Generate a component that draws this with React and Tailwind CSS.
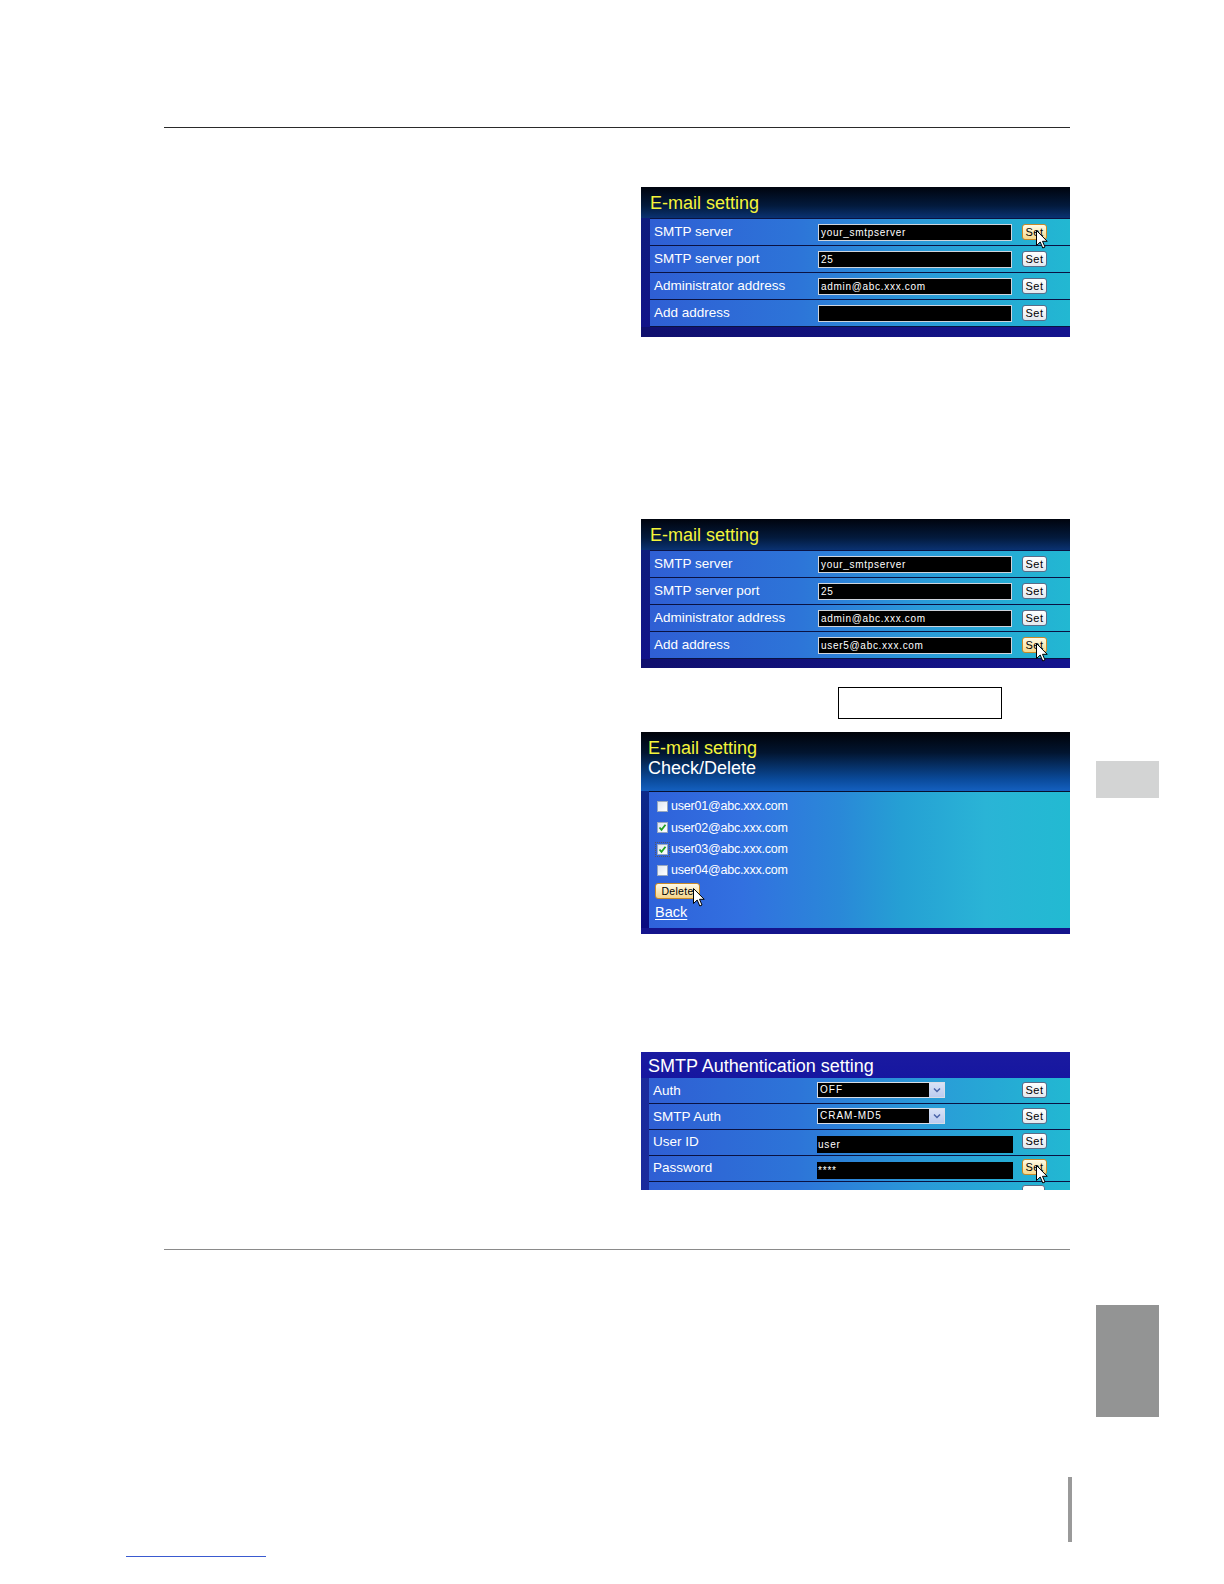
import React from "react";

const Cursor = ({ className }) => (
  <svg
    className={"absolute pointer-events-none " + className}
    width="12"
    height="19"
    viewBox="0 0 12 19"
  >
    <path
      d="M0.5 0.5 L0.5 15.5 L4.2 12 L6.8 18 L9 17 L6.5 11.3 L11.2 11.3 Z"
      fill="white"
      stroke="black"
      strokeWidth="1"
    />
  </svg>
);

const SetButton = ({ hover }) => (
  <div
    className={
      "relative w-[25px] h-[16px] rounded-[3px] border flex items-center justify-center text-[11px] leading-none text-black tracking-[0.5px] " +
      (hover
        ? "border-[#c88a2a] bg-[linear-gradient(#fffbe6,#f6d98c)]"
        : "border-[#5a6c88] bg-[linear-gradient(#ffffff,#e4e8ee)]")
    }
    style={{ fontFamily: '"Liberation Sans", Arial, sans-serif' }}
  >
    Set
    {hover && <Cursor className="left-[13px] top-[5px]" />}
  </div>
);

const rowBg =
  "bg-[linear-gradient(90deg,#2f5fd4_0%,#2d74d8_35%,#2a9ad8_65%,#22b8d2_100%)]";

const EmailRow = ({ label, value, hover }) => (
  <div className={"flex items-center h-[27px] border-b border-[#0a1242] " + rowBg}>
    <div className="w-[168px] pl-[4px] text-white text-[13.5px] leading-none">{label}</div>
    <div className="w-[194px] h-[17px] bg-black border border-[#cfd4dc] text-white text-[10px] pl-[2px] leading-[15px] tracking-[0.7px]">
      {value}
    </div>
    <div className="ml-[10px]">
      <SetButton hover={hover} />
    </div>
  </div>
);

const EmailPanel = ({ h, rows }) => (
  <div
    className={"flex flex-col bg-[linear-gradient(180deg,#0d1e78,#12128a)] " + h}
    style={{ fontFamily: '"Liberation Sans", Arial, sans-serif' }}
  >
    <div className="h-[31px] shrink-0 bg-[linear-gradient(180deg,#00040e_0%,#031a3c_60%,#0a3272_100%)] pl-[9px] pt-[5px] text-[18px] leading-[22px] text-[#f4f43a]">
      E-mail setting
    </div>
    <div className="ml-[9px] flex flex-col border-t border-[#0a1242]">
      {rows.map((r) => (
        <EmailRow key={r.label} {...r} />
      ))}
    </div>
    <div className="flex-1 bg-[linear-gradient(90deg,#10106e,#14148e)]" />
  </div>
);

const Check = ({ checked, focus }) => (
  <div
    className={
      "w-[15px] h-[15px] flex items-center justify-center " +
      (focus ? "border border-dotted border-[#556]" : "")
    }
  >
    <div className="w-[11px] h-[11px] bg-[linear-gradient(135deg,#dfe6f2,#ffffff)] border border-[#98a8c0] flex items-center justify-center">
      {checked && (
        <svg width="9" height="9" viewBox="0 0 9 9">
          <path d="M1.5 4.5 L3.5 6.8 L7.5 1.8" fill="none" stroke="#21a121" strokeWidth="1.8" />
        </svg>
      )}
    </div>
  </div>
);

const CheckPanel = () => (
  <div
    className="h-[202px] flex flex-col bg-[linear-gradient(180deg,#0d1e78,#12128a)]"
    style={{ fontFamily: '"Liberation Sans", Arial, sans-serif' }}
  >
    <div className="h-[59px] shrink-0 bg-[linear-gradient(180deg,#000208_0%,#021530_35%,#0a4a9a_80%,#1460c0_100%)] pl-[7px] pt-[6px]">
      <div className="text-[18px] leading-[20px] text-[#f4f43a]">E-mail setting</div>
      <div className="text-[18px] leading-[20px] text-white">Check/Delete</div>
    </div>
    <div className="flex flex-1 bg-[linear-gradient(180deg,#0d2a8a,#0a0a80)]">
      <div className="w-[8px] shrink-0" />
      <div className="flex-1 border-t border-[#07102e] bg-[linear-gradient(90deg,#2f62da_0%,#3270e0_22%,#2a88d8_45%,#25a0d4_60%,#2ab4d6_80%,#22bad2_100%)] pl-[6px] pt-[4px] flex flex-col">
        {[
          ["user01@abc.xxx.com", false, false],
          ["user02@abc.xxx.com", true, false],
          ["user03@abc.xxx.com", true, true],
          ["user04@abc.xxx.com", false, false],
        ].map(([t, c, f]) => (
          <div key={t} className="h-[21.3px] flex items-center gap-[1px]">
            <Check checked={c} focus={f} />
            <span className="text-white text-[12.5px] leading-none tracking-[-0.2px]">{t}</span>
          </div>
        ))}
        <div className="mt-[2px] relative w-[45px] h-[16px] rounded-[3px] border border-[#c88a2a] bg-[linear-gradient(#fffbe6,#f4d48a)] flex items-center justify-center text-[10.5px] text-black leading-none tracking-[0.3px]">
          Delete
          <Cursor className="left-[37px] top-[4px]" />
        </div>
        <div className="mt-[6px] text-white text-[14.5px] leading-none underline underline-offset-2">Back</div>
      </div>
    </div>
    <div className="h-[6px] shrink-0 bg-[#14148c]" />
  </div>
);

const Select = ({ value }) => (
  <div className="w-[128px] h-[16px] bg-black border border-[#d8dde6] flex">
    <div className="flex-1 text-white text-[10px] leading-[14px] pl-[2px] tracking-[1px]">{value}</div>
    <div className="w-[15px] h-full bg-[linear-gradient(#d8e2f6,#bccbef)] flex items-center justify-center">
      <svg width="8" height="6" viewBox="0 0 8 6">
        <path d="M1 1.5 L4 4.5 L7 1.5" fill="none" stroke="#4a64a8" strokeWidth="1.5" />
      </svg>
    </div>
  </div>
);

const AuthRow = ({ label, children, hover, low }) => (
  <div className={"flex h-[26px] border-b border-[#0a1242] " + rowBg}>
    <div className={"w-[168px] pl-[4px] text-white text-[13.5px] leading-none " + (low ? "pt-[5px]" : "pt-[6px]")}>
      {label}
    </div>
    <div className={"w-[196px] " + (low ? "pt-[5px]" : "pt-[4px]")}>{children}</div>
    <div className={"ml-[9px] " + (low ? "pt-[3px]" : "pt-[4px]")}>
      <SetButton hover={hover} />
    </div>
  </div>
);

const BlackInput = ({ value }) => (
  <div className="w-[196px] h-[17px] bg-black text-white text-[10px] leading-[17px] pl-[1px] tracking-[0.8px] mt-[1px]">
    {value}
  </div>
);

const AuthPanel = () => (
  <div
    className="h-[138px] flex flex-col bg-[linear-gradient(90deg,#1a2a9c,#3a5ab8)] overflow-hidden"
    style={{ fontFamily: '"Liberation Sans", Arial, sans-serif' }}
  >
    <div className="h-[26px] shrink-0 bg-[linear-gradient(180deg,#1a1aa0,#1616a0)] pl-[7px] pt-[3px] text-white text-[18px] leading-[22px]">
      SMTP Authentication setting
    </div>
    <div className="ml-[8px] flex flex-col">
      <AuthRow label="Auth">
        <Select value="OFF" />
      </AuthRow>
      <AuthRow label="SMTP Auth">
        <Select value="CRAM-MD5" />
      </AuthRow>
      <AuthRow label="User ID" low>
        <BlackInput value="user" />
      </AuthRow>
      <AuthRow label="Password" low hover>
        <BlackInput value="****" />
      </AuthRow>
      <div className={"flex h-[26px] " + rowBg}>
        <div className="w-[373px]" />
        <div className="mt-[3px] w-[23px] h-[16px] rounded-[3px] border border-[#5a6c88] bg-white" />
      </div>
    </div>
  </div>
);

export default function App() {
  return (
    <div className="w-[1224px] h-[1584px] bg-white flex overflow-hidden">
      <div className="w-[1096px] shrink-0 flex flex-col">
        <div className="h-[127px] shrink-0" />
        <div className="ml-[164px] w-[906px] h-[1px] bg-[#2a2a2a] shrink-0" />
        <div className="ml-[641px] w-[429px] flex flex-col shrink-0">
          <div className="mt-[59px]">
            <EmailPanel
              h="h-[150px]"
              rows={[
                { label: "SMTP server", value: "your_smtpserver", hover: true },
                { label: "SMTP server port", value: "25" },
                { label: "Administrator address", value: "admin@abc.xxx.com" },
                { label: "Add address", value: "" },
              ]}
            />
          </div>
          <div className="mt-[182px]">
            <EmailPanel
              h="h-[149px]"
              rows={[
                { label: "SMTP server", value: "your_smtpserver" },
                { label: "SMTP server port", value: "25" },
                { label: "Administrator address", value: "admin@abc.xxx.com" },
                { label: "Add address", value: "user5@abc.xxx.com", hover: true },
              ]}
            />
          </div>
          <div className="mt-[19px] ml-[197px] w-[164px] h-[32px] border border-black" />
          <div className="mt-[13px]">
            <CheckPanel />
          </div>
          <div className="mt-[118px]">
            <AuthPanel />
          </div>
        </div>
        <div className="mt-[59px] ml-[164px] w-[906px] h-[1px] bg-[#8a8a8a] shrink-0" />
        <div className="mt-[227px] ml-[1068px] w-[4px] h-[65px] bg-[#9a9a9a] shrink-0" />
        <div className="mt-[14px] ml-[126px] w-[140px] h-[1px] bg-[#3a5ad0] shrink-0" />
      </div>
      <div className="w-[63px] shrink-0 flex flex-col">
        <div className="mt-[761px] h-[37px] bg-[#d3d4d4]" />
        <div className="mt-[507px] h-[112px] bg-[#939494]" />
      </div>
    </div>
  );
}
